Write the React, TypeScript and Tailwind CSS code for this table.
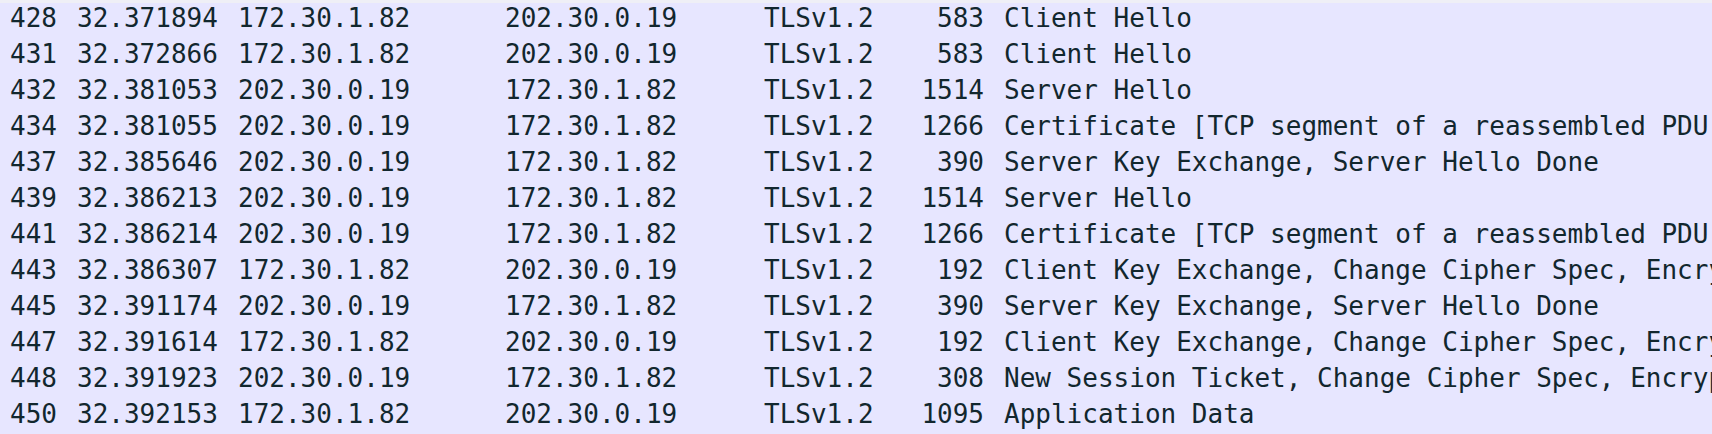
const PACKETS = [
  { no: 428, time: '32.371894', src: '172.30.1.82', dst: '202.30.0.19', len: 583, info: 'Client Hello' },
  { no: 431, time: '32.372866', src: '172.30.1.82', dst: '202.30.0.19', len: 583, info: 'Client Hello' },
  { no: 432, time: '32.381053', src: '202.30.0.19', dst: '172.30.1.82', len: 1514, info: 'Server Hello' },
  { no: 434, time: '32.381055', src: '202.30.0.19', dst: '172.30.1.82', len: 1266, info: 'Certificate [TCP segment of a reassembled PDU]' },
  { no: 437, time: '32.385646', src: '202.30.0.19', dst: '172.30.1.82', len: 390, info: 'Server Key Exchange, Server Hello Done' },
  { no: 439, time: '32.386213', src: '202.30.0.19', dst: '172.30.1.82', len: 1514, info: 'Server Hello' },
  { no: 441, time: '32.386214', src: '202.30.0.19', dst: '172.30.1.82', len: 1266, info: 'Certificate [TCP segment of a reassembled PDU]' },
  { no: 443, time: '32.386307', src: '172.30.1.82', dst: '202.30.0.19', len: 192, info: 'Client Key Exchange, Change Cipher Spec, Encrypted Handshake Message' },
  { no: 445, time: '32.391174', src: '202.30.0.19', dst: '172.30.1.82', len: 390, info: 'Server Key Exchange, Server Hello Done' },
  { no: 447, time: '32.391614', src: '172.30.1.82', dst: '202.30.0.19', len: 192, info: 'Client Key Exchange, Change Cipher Spec, Encrypted Handshake Message' },
  { no: 448, time: '32.391923', src: '202.30.0.19', dst: '172.30.1.82', len: 308, info: 'New Session Ticket, Change Cipher Spec, Encrypted Handshake Message' },
  { no: 450, time: '32.392153', src: '172.30.1.82', dst: '202.30.0.19', len: 1095, info: 'Application Data' },
];

export default function App() {
  return (
    <div
      className="w-[1712px] h-[434px] overflow-hidden bg-[#e7e6ff] text-[#12272e] text-[26px] shadow-[inset_0_3px_0_#efeff6]"
      style={{ fontFamily: '"DejaVu Sans Mono", "Liberation Mono", monospace' }}
    >
      {PACKETS.map(p => (
        <div key={p.no} className="flex h-[36px] leading-[36px] whitespace-nowrap">
          <div className="w-[57px] shrink-0 text-right">{p.no}</div>
          <div className="w-[181px] shrink-0 pl-[20px]">{p.time}</div>
          <div className="w-[267px] shrink-0">{p.src}</div>
          <div className="w-[259px] shrink-0">{p.dst}</div>
          <div className="w-[140px] shrink-0">TLSv1.2</div>
          <div className="w-[80px] shrink-0 text-right">{p.len}</div>
          <div className="flex-1 min-w-0 overflow-hidden pl-[20px]">{p.info}</div>
        </div>
      ))}
    </div>
  );
}
